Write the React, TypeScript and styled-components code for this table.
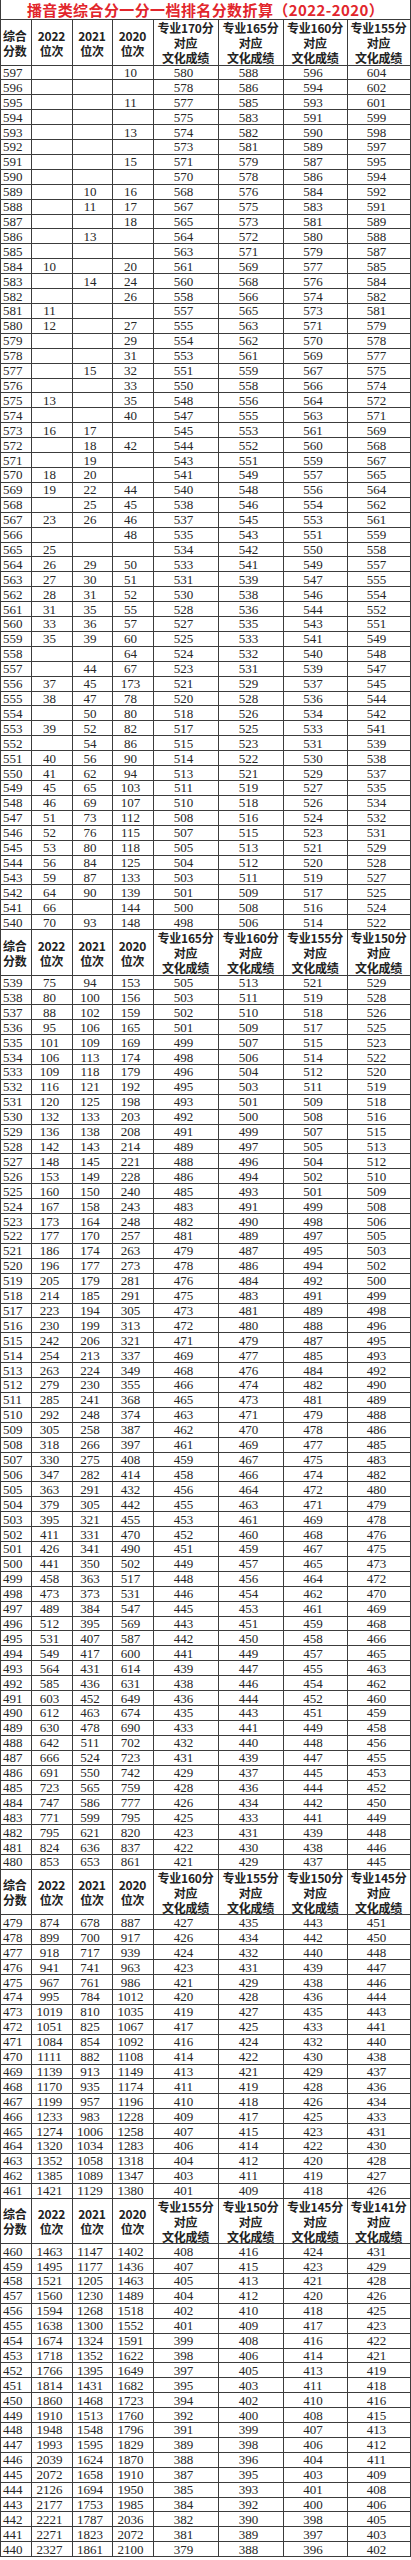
import React from 'react';
import styled, { createGlobalStyle } from 'styled-components';

const GlobalStyle = createGlobalStyle`
  html, body { margin: 0; padding: 0; background: #ffffff; }
  body { width: 411px; }
`;

const COLS = '31px 41px 40px 41px 65px 65px 64px 63px';
const ROW_H = 14.92;
const HEAD_H = 45.5;
const LINE = '#3c3c3c';

const Sheet = styled.div`
  width: 411px;
  box-sizing: border-box;
  border-left: 1px solid ${LINE};
  background: #fff;
`;

const Title = styled.div`
  height: 20px;
  box-sizing: border-box;
  border-right: 1px solid ${LINE};
  border-bottom: 1px solid ${LINE};
  display: flex;
  align-items: center;
  justify-content: center;
  font-family: "Noto Sans CJK SC", sans-serif;
  font-weight: 700;
  font-size: 15px;
  line-height: 19px;
  letter-spacing: 0.4px;
  color: #e2262c;
  white-space: nowrap;
`;

const Row = styled.div<{ $h: number }>`
  display: grid;
  grid-template-columns: ${COLS};
  height: ${(p) => p.$h}px;
  box-sizing: border-box;
  border-bottom: 1px solid ${LINE};
`;

const Cell = styled.div<{ $first?: boolean }>`
  box-sizing: border-box;
  border-right: 1px solid ${LINE};
  display: flex;
  align-items: center;
  justify-content: ${(p) => (p.$first ? 'flex-start' : 'center')};
  padding: ${(p) => (p.$first ? '0 0 0 2px' : '0 5px 0 0')};
  font-family: "Liberation Serif", "Times New Roman", serif;
  font-size: 13px;
  color: #262626;
  line-height: 13px;
  white-space: nowrap;
`;

const HeadCell = styled.div<{ $first?: boolean }>`
  box-sizing: border-box;
  border-right: 1px solid ${LINE};
  display: flex;
  flex-direction: column;
  align-items: ${(p) => (p.$first ? 'flex-start' : 'center')};
  justify-content: center;
  padding: ${(p) => (p.$first ? '0 0 0 2px' : '0 1px 0 0')};
  font-family: "Noto Sans CJK SC", sans-serif;
  font-weight: 700;
  font-size: 12px;
  line-height: 15px;
  color: #222;
  white-space: nowrap;
`;

const HeadLine = styled.span`
  display: block;
  letter-spacing: -0.2px;
`;

type Block = { scores: number[]; rows: string[] };

const blocks: Block[] = [
  {
    scores: [170, 165, 160, 155],
    rows: [
      '597,,,10,580,588,596,604',
      '596,,,,578,586,594,602',
      '595,,,11,577,585,593,601',
      '594,,,,575,583,591,599',
      '593,,,13,574,582,590,598',
      '592,,,,573,581,589,597',
      '591,,,15,571,579,587,595',
      '590,,,,570,578,586,594',
      '589,,10,16,568,576,584,592',
      '588,,11,17,567,575,583,591',
      '587,,,18,565,573,581,589',
      '586,,13,,564,572,580,588',
      '585,,,,563,571,579,587',
      '584,10,,20,561,569,577,585',
      '583,,14,24,560,568,576,584',
      '582,,,26,558,566,574,582',
      '581,11,,,557,565,573,581',
      '580,12,,27,555,563,571,579',
      '579,,,29,554,562,570,578',
      '578,,,31,553,561,569,577',
      '577,,15,32,551,559,567,575',
      '576,,,33,550,558,566,574',
      '575,13,,35,548,556,564,572',
      '574,,,40,547,555,563,571',
      '573,16,17,,545,553,561,569',
      '572,,18,42,544,552,560,568',
      '571,,19,,543,551,559,567',
      '570,18,20,,541,549,557,565',
      '569,19,22,44,540,548,556,564',
      '568,,25,45,538,546,554,562',
      '567,23,26,46,537,545,553,561',
      '566,,,48,535,543,551,559',
      '565,25,,,534,542,550,558',
      '564,26,29,50,533,541,549,557',
      '563,27,30,51,531,539,547,555',
      '562,28,31,52,530,538,546,554',
      '561,31,35,55,528,536,544,552',
      '560,33,36,57,527,535,543,551',
      '559,35,39,60,525,533,541,549',
      '558,,,64,524,532,540,548',
      '557,,44,67,523,531,539,547',
      '556,37,45,173,521,529,537,545',
      '555,38,47,78,520,528,536,544',
      '554,,50,80,518,526,534,542',
      '553,39,52,82,517,525,533,541',
      '552,,54,86,515,523,531,539',
      '551,40,56,90,514,522,530,538',
      '550,41,62,94,513,521,529,537',
      '549,45,65,103,511,519,527,535',
      '548,46,69,107,510,518,526,534',
      '547,51,73,112,508,516,524,532',
      '546,52,76,115,507,515,523,531',
      '545,53,80,118,505,513,521,529',
      '544,56,84,125,504,512,520,528',
      '543,59,87,133,503,511,519,527',
      '542,64,90,139,501,509,517,525',
      '541,66,,144,500,508,516,524',
      '540,70,93,148,498,506,514,522',
    ],
  },
  {
    scores: [165, 160, 155, 150],
    rows: [
      '539,75,94,153,505,513,521,529',
      '538,80,100,156,503,511,519,528',
      '537,88,102,159,502,510,518,526',
      '536,95,106,165,501,509,517,525',
      '535,101,109,169,499,507,515,523',
      '534,106,113,174,498,506,514,522',
      '533,109,118,179,496,504,512,520',
      '532,116,121,192,495,503,511,519',
      '531,120,125,198,493,501,509,518',
      '530,132,133,203,492,500,508,516',
      '529,136,138,208,491,499,507,515',
      '528,142,143,214,489,497,505,513',
      '527,148,145,221,488,496,504,512',
      '526,153,149,228,486,494,502,510',
      '525,160,150,240,485,493,501,509',
      '524,167,158,243,483,491,499,508',
      '523,173,164,248,482,490,498,506',
      '522,177,170,257,481,489,497,505',
      '521,186,174,263,479,487,495,503',
      '520,196,177,273,478,486,494,502',
      '519,205,179,281,476,484,492,500',
      '518,214,185,291,475,483,491,499',
      '517,223,194,305,473,481,489,498',
      '516,230,199,313,472,480,488,496',
      '515,242,206,321,471,479,487,495',
      '514,254,213,337,469,477,485,493',
      '513,263,224,349,468,476,484,492',
      '512,279,230,355,466,474,482,490',
      '511,285,241,368,465,473,481,489',
      '510,292,248,374,463,471,479,488',
      '509,305,258,387,462,470,478,486',
      '508,318,266,397,461,469,477,485',
      '507,330,275,408,459,467,475,483',
      '506,347,282,414,458,466,474,482',
      '505,363,291,432,456,464,472,480',
      '504,379,305,442,455,463,471,479',
      '503,395,321,455,453,461,469,478',
      '502,411,331,470,452,460,468,476',
      '501,426,341,490,451,459,467,475',
      '500,441,350,502,449,457,465,473',
      '499,458,363,517,448,456,464,472',
      '498,473,373,531,446,454,462,470',
      '497,489,384,547,445,453,461,469',
      '496,512,395,569,443,451,459,468',
      '495,531,407,587,442,450,458,466',
      '494,549,417,600,441,449,457,465',
      '493,564,431,614,439,447,455,463',
      '492,585,436,631,438,446,454,462',
      '491,603,452,649,436,444,452,460',
      '490,612,463,674,435,443,451,459',
      '489,630,478,690,433,441,449,458',
      '488,642,511,702,432,440,448,456',
      '487,666,524,723,431,439,447,455',
      '486,691,550,742,429,437,445,453',
      '485,723,565,759,428,436,444,452',
      '484,747,586,777,426,434,442,450',
      '483,771,599,795,425,433,441,449',
      '482,795,621,820,423,431,439,448',
      '481,824,636,837,422,430,438,446',
      '480,853,653,861,421,429,437,445',
    ],
  },
  {
    scores: [160, 155, 150, 145],
    rows: [
      '479,874,678,887,427,435,443,451',
      '478,899,700,917,426,434,442,450',
      '477,918,717,939,424,432,440,448',
      '476,941,741,963,423,431,439,447',
      '475,967,761,986,421,429,438,446',
      '474,995,784,1012,420,428,436,444',
      '473,1019,810,1035,419,427,435,443',
      '472,1051,825,1067,417,425,433,441',
      '471,1084,854,1092,416,424,432,440',
      '470,1111,882,1108,414,422,430,438',
      '469,1139,913,1149,413,421,429,437',
      '468,1170,935,1174,411,419,428,436',
      '467,1199,957,1196,410,418,426,434',
      '466,1233,983,1228,409,417,425,433',
      '465,1274,1006,1258,407,415,423,431',
      '464,1320,1034,1283,406,414,422,430',
      '463,1352,1058,1318,404,412,420,428',
      '462,1385,1089,1347,403,411,419,427',
      '461,1421,1129,1380,401,409,418,426',
    ],
  },
  {
    scores: [155, 150, 145, 141],
    rows: [
      '460,1463,1147,1402,408,416,424,431',
      '459,1495,1177,1436,407,415,423,429',
      '458,1521,1205,1463,405,413,421,428',
      '457,1560,1230,1489,404,412,420,426',
      '456,1594,1268,1518,402,410,418,425',
      '455,1638,1300,1552,401,409,417,423',
      '454,1674,1324,1591,399,408,416,422',
      '453,1718,1352,1622,398,406,414,421',
      '452,1766,1395,1649,397,405,413,419',
      '451,1814,1431,1682,395,403,411,418',
      '450,1860,1468,1723,394,402,410,416',
      '449,1910,1513,1760,392,400,408,415',
      '448,1948,1548,1796,391,399,407,413',
      '447,1993,1595,1829,389,398,406,412',
      '446,2039,1624,1870,388,396,404,411',
      '445,2072,1658,1910,387,395,403,409',
      '444,2126,1694,1950,385,393,401,408',
      '443,2177,1753,1985,384,392,400,406',
      '442,2221,1787,2036,382,390,398,405',
      '441,2271,1823,2072,381,389,397,403',
      '440,2327,1861,2100,379,388,396,402',
    ],
  },
];

const HeaderRow: React.FC<{ scores: number[] }> = ({ scores }) => (
  <Row $h={HEAD_H}>
    <HeadCell $first>
      <HeadLine>综合</HeadLine>
      <HeadLine>分数</HeadLine>
    </HeadCell>
    {['2022', '2021', '2020'].map((y) => (
      <HeadCell key={y}>
        <HeadLine>{y}</HeadLine>
        <HeadLine>位次</HeadLine>
      </HeadCell>
    ))}
    {scores.map((s) => (
      <HeadCell key={s}>
        <HeadLine>专业{s}分</HeadLine>
        <HeadLine>对应</HeadLine>
        <HeadLine>文化成绩</HeadLine>
      </HeadCell>
    ))}
  </Row>
);

const DataRow: React.FC<{ line: string }> = ({ line }) => {
  const cells = line.split(',');
  return (
    <Row $h={ROW_H}>
      {cells.map((c, i) => (
        <Cell key={i} $first={i === 0}>
          {c}
        </Cell>
      ))}
    </Row>
  );
};

export default function App() {
  return (
    <>
      <GlobalStyle />
      <Sheet>
        <Title>播音类综合分一分一档排名分数折算（2022-2020）</Title>
        {blocks.map((b, bi) => (
          <React.Fragment key={bi}>
            <HeaderRow scores={b.scores} />
            {b.rows.map((r) => (
              <DataRow key={r} line={r} />
            ))}
          </React.Fragment>
        ))}
      </Sheet>
    </>
  );
}
